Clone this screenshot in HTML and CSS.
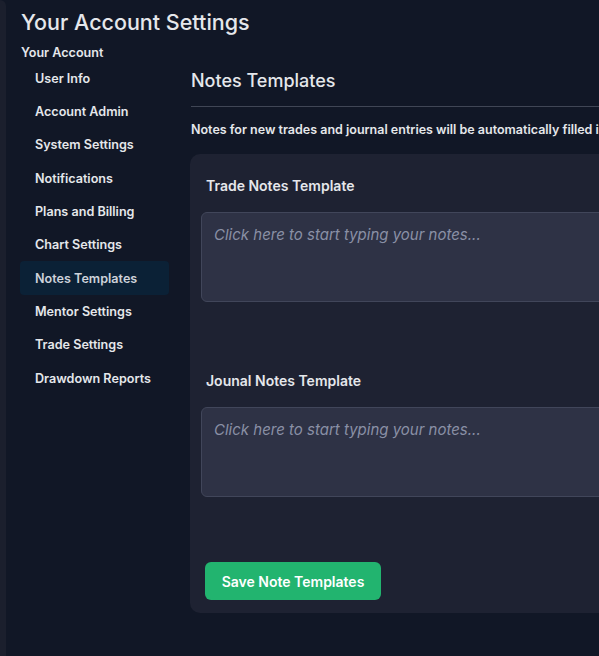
FILE: index.html
```html
<!DOCTYPE html>
<html lang="en">
<head>
    <meta charset="UTF-8">
    <meta name="viewport" content="width=device-width, initial-scale=1.0">
    <title>Your Account Settings</title>
    <link rel="stylesheet" href="styles.css">
</head>
<body>
    <div class="shell">
        <div class="edge"></div>

        <div class="page">
            <h1 class="page-title">Your Account Settings</h1>

            <div class="layout">
                <!-- Sidebar -->
                <nav class="sidebar">
                    <div class="sidebar-heading">Your Account</div>
                    <a class="nav-item" href="#">User Info</a>
                    <a class="nav-item" href="#">Account Admin</a>
                    <a class="nav-item" href="#">System Settings</a>
                    <a class="nav-item" href="#">Notifications</a>
                    <a class="nav-item" href="#">Plans and Billing</a>
                    <a class="nav-item" href="#">Chart Settings</a>
                    <a class="nav-item active" href="#">Notes Templates</a>
                    <a class="nav-item" href="#">Mentor Settings</a>
                    <a class="nav-item" href="#">Trade Settings</a>
                    <a class="nav-item" href="#">Drawdown Reports</a>
                </nav>

                <!-- Content -->
                <main class="content">
                    <h2 class="section-title">Notes Templates</h2>
                    <p class="section-desc">Notes for new trades and journal entries will be automatically filled in with these templates.</p>

                    <div class="card">
                        <div class="field">
                            <label class="field-label" for="tradeNotes">Trade Notes Template</label>
                            <textarea id="tradeNotes" class="notes" placeholder="Click here to start typing your notes..."></textarea>
                        </div>

                        <div class="field last">
                            <label class="field-label" for="journalNotes">Jounal Notes Template</label>
                            <textarea id="journalNotes" class="notes" placeholder="Click here to start typing your notes..."></textarea>
                        </div>

                        <button class="save-btn">Save Note Templates</button>
                    </div>
                </main>
            </div>
        </div>
    </div>
</body>
</html>
```

FILE: styles.css
```css
/* Genel */
body {
    margin: 0;
    background: #111726;
    color: #e5e7eb;
    font-family: Inter, 'Noto Sans', sans-serif;
    overflow: hidden;
    height: 656px;
}

.shell {
    display: flex;
    height: 100%;
}

.edge {
    width: 6px;
    flex-shrink: 0;
    background: #1b1f2d;
    border-top-right-radius: 8px;
}

.page {
    padding: 8px 0 0 15px;
}

.page-title {
    margin: 0;
    font-size: 21.5px;
    line-height: 28px;
    font-weight: 500;
    color: #e5e7eb;
}

.layout {
    display: flex;
    gap: 22px;
    margin-top: 8px;
}

/* Sidebar */
.sidebar {
    width: 149px;
    flex-shrink: 0;
    display: flex;
    flex-direction: column;
    margin-left: -1px;
    padding-top: 1px;
}

.sidebar-heading {
    font-size: 12.6px;
    line-height: 16px;
    font-weight: 600;
    padding-left: 1px;
    margin-bottom: 0.5px;
}

.nav-item {
    display: flex;
    align-items: center;
    height: 33.33px;
    padding-left: 15px;
    font-size: 12.6px;
    font-weight: 600;
    color: #e5e7eb;
    text-decoration: none;
    border-radius: 4px;
}

.nav-item.active {
    background: #0b2136;
    color: #cdd2da;
}

/* Content */
.content {
    width: 820px;
    flex-shrink: 0;
}

.section-title {
    margin: 25px 0 0;
    padding-bottom: 13px;
    border-bottom: 1px solid #404655;
    font-size: 18px;
    line-height: 24px;
    font-weight: 500;
}

.section-desc {
    margin: 15px 0 0;
    font-size: 12.5px;
    line-height: 16px;
    font-weight: 600;
    white-space: nowrap;
}

.card {
    margin-top: 16px;
    margin-left: -1px;
    background: #1e2232;
    border-radius: 10px;
    padding: 22px 11px 13px;
}

.field {
    margin-bottom: 69px;
}

.field.last {
    margin-bottom: 65px;
}

.field-label {
    display: block;
    padding-left: 5px;
    font-size: 14px;
    line-height: 20px;
    font-weight: 600;
    margin-bottom: 16px;
}

.notes {
    display: block;
    width: 100%;
    height: 90px;
    box-sizing: border-box;
    padding: 12px 12px;
    background: #2e3245;
    border: 1px solid #41465a;
    border-radius: 6px;
    color: #e5e7eb;
    font-family: Inter, 'Noto Sans', sans-serif;
    font-size: 15px;
    line-height: 20px;
    resize: none;
    outline: none;
}

.notes::placeholder {
    color: #8a90a5;
    font-style: italic;
}

.save-btn {
    margin-left: 4px;
    width: 176px;
    height: 38px;
    background: #22b46f;
    color: #fff;
    border: none;
    border-radius: 6px;
    font-family: Inter, 'Noto Sans', sans-serif;
    font-size: 14px;
    font-weight: 600;
    cursor: pointer;
}
```
